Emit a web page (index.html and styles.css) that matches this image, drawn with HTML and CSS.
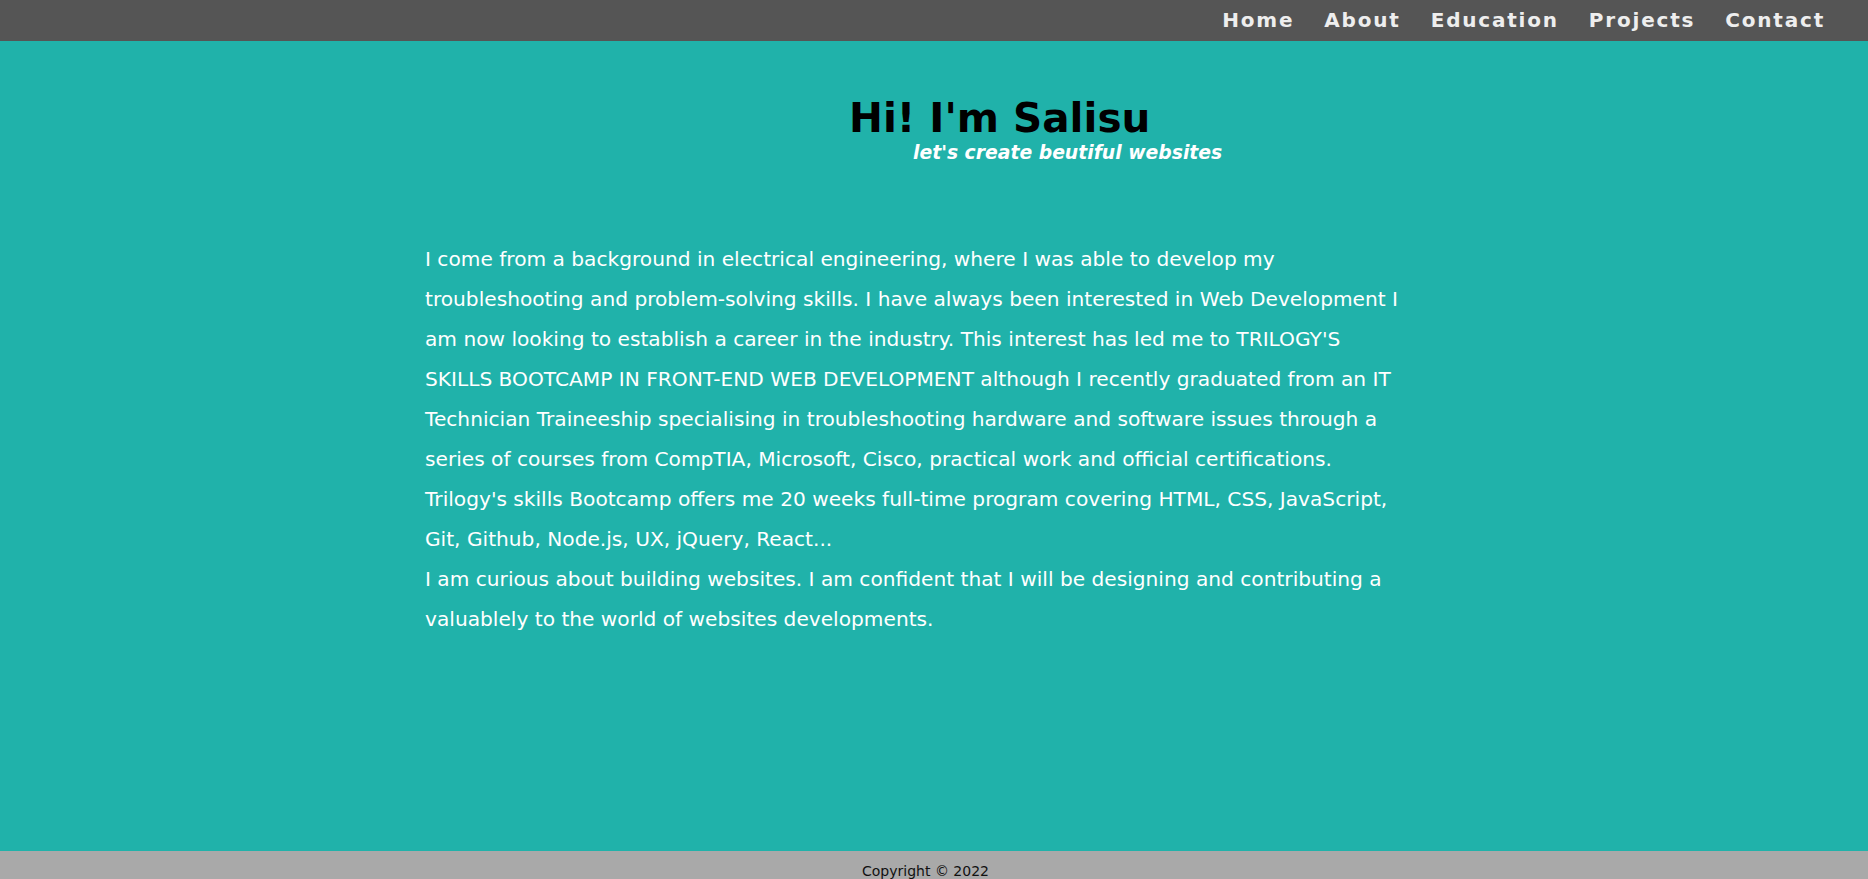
FILE: index.html
```html
<!DOCTYPE html>
<html lang="en">
<head>
<meta charset="utf-8">
<title>Salisu</title>
<link rel="stylesheet" href="styles.css">
</head>
<body>
<nav class="topnav">
  <a href="#" class="nav-link">Home</a>
  <a href="#" class="nav-link">About</a>
  <a href="#" class="nav-link">Education</a>
  <a href="#" class="nav-link">Projects</a>
  <a href="#" class="nav-link">Contact</a>
</nav>
<main class="main">
  <header class="hero">
    <h1 class="hero-title">Hi! I'm Salisu</h1>
    <p class="hero-sub">let's create beutiful websites</p>
  </header>
  <section class="about">
    <p class="about-text">I come from a background in electrical engineering, where I was able to develop my troubleshooting and problem-solving skills. I have always been interested in Web Development I am now looking to establish a career in the industry. This interest has led me to TRILOGY'S SKILLS BOOTCAMP IN FRONT-END WEB DEVELOPMENT although I recently graduated from an IT Technician Traineeship specialising in troubleshooting hardware and software issues through a series of courses from CompTIA, Microsoft, Cisco, practical work and official certifications.<br>Trilogy's skills Bootcamp offers me 20 weeks full-time program covering HTML, CSS, JavaScript, Git, Github, Node.js, UX, jQuery, React...<br>I am curious about building websites. I am confident that I will be designing and contributing a valuablely to the world of websites developments.</p>
  </section>
</main>
<footer class="footer">Copyright © 2022</footer>
</body>
</html>
```

FILE: styles.css
```css
html, body {
  margin: 0;
  padding: 0;
}

body {
  height: 100vh;
  overflow: hidden;
  display: flex;
  flex-direction: column;
  background: #20b2aa;
  font-family: "DejaVu Sans", Verdana, sans-serif;
  color: #fff;
}

.topnav {
  flex: 0 0 41px;
  height: 41px;
  box-sizing: border-box;
  background: #555555;
  display: flex;
  justify-content: flex-end;
  align-items: center;
  gap: 30px;
  padding: 0 43px 2px 0;
}

.nav-link {
  font-family: "DejaVu Sans", Verdana, sans-serif;
  font-weight: bold;
  font-size: 20px;
  letter-spacing: 1.8px;
  color: #eeeeee;
  text-decoration: none;
}

.main {
  flex: 1 1 auto;
  padding-top: 53px;
}

.hero {
  display: flex;
  flex-direction: column;
}

.hero-title {
  margin: 0 0 0 849px;
  font-size: 40.5px;
  font-weight: bold;
  color: #000;
  line-height: normal;
}

.hero-sub {
  margin: 0 0 0 913px;
  font-size: 18.8px;
  font-weight: bold;
  font-style: italic;
  color: #fff;
}

.about {
  margin: 76px 0 0 425px;
  width: 984px;
}

.about-text {
  margin: 0;
  font-size: 20.17px;
  line-height: 40px;
  color: #fff;
}

.footer {
  flex: 0 0 28px;
  height: 28px;
  overflow: hidden;
  box-sizing: border-box;
  padding: 12px 17px 0 0;
  background: #a9a9a9;
  color: #111;
  font-size: 14px;
  text-align: center;
}
```
